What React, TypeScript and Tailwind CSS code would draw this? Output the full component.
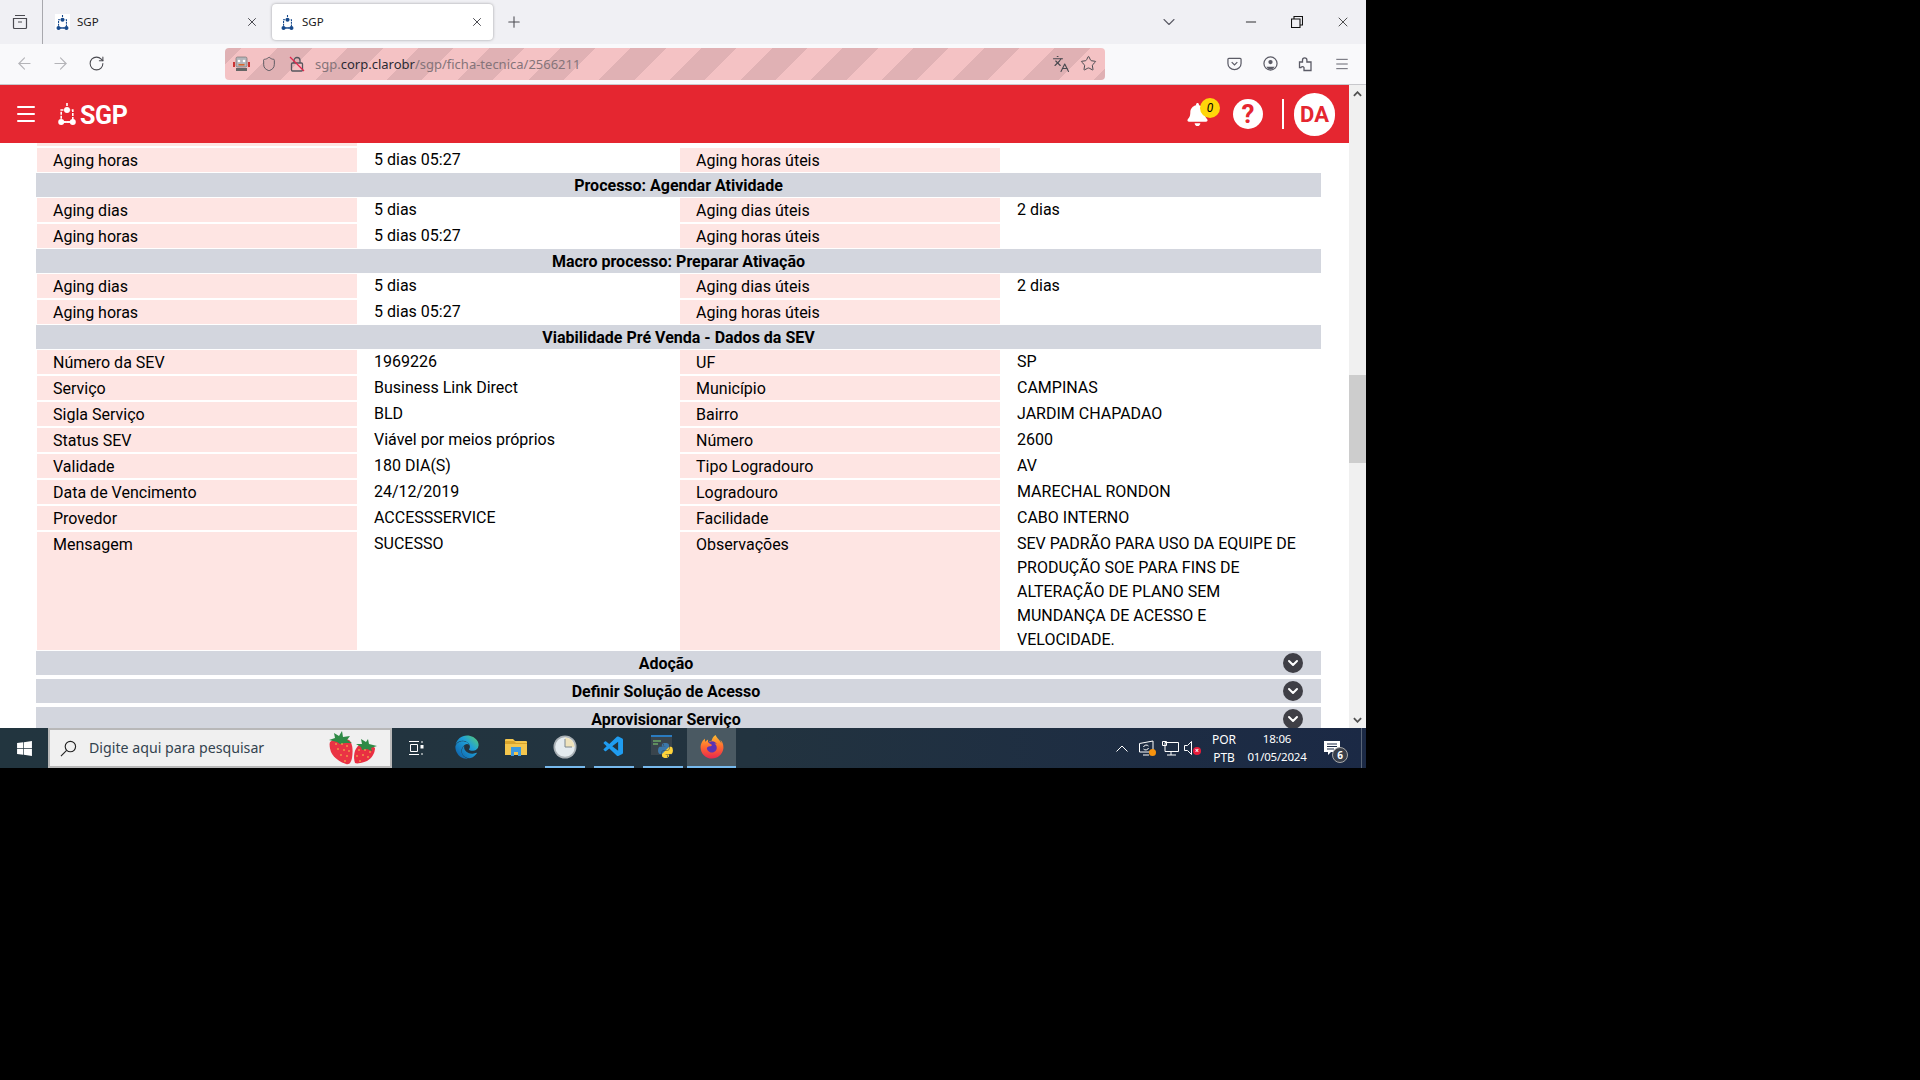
import React from "react";
import { ArrowLeft, ArrowRight, RotateCw, Shield, Star, Languages, X, Plus, ChevronDown, Menu, Minus } from "lucide-react";
import { FaBell, FaWindows, FaFirefoxBrowser, FaPython, FaEdge } from "react-icons/fa";
import { VscVscode } from "react-icons/vsc";

const ff = "font-['Roboto',sans-serif]";

function NetLogo({ className, color }: { className: string; color: string }) {
  return (
    <svg viewBox="0 0 18 22" className={className} fill="none">
      <path d="M9 0v4M5.5 7H3.2v12h11.6V7h-2.3" stroke={color} strokeWidth="1.6" strokeDasharray="3 1" />
      <circle cx="9" cy="7" r="3" fill={color} />
      <circle cx="3.2" cy="19" r="3" fill={color} />
      <circle cx="14.8" cy="19" r="3" fill={color} />
      <path d="M3 19h12" stroke={color} strokeWidth="1.8" />
    </svg>
  );
}

function Tab({ active }: { active?: boolean }) {
  return (
    <div className={"w-[221px] h-[36px] flex items-center pl-[8px] rounded " + (active ? "bg-white shadow-[0_0_3px_rgba(0,0,0,0.35)]" : "")}>
      <div className="w-[15px] h-[16px] bg-white flex items-center justify-center shrink-0">
        <NetLogo className="w-[13px] h-[15px] shrink-0" color="#174a8c" />
      </div>
      <span className="ml-[7px] text-[11.5px] text-[#1c1b22] font-['Noto_Sans',sans-serif]">SGP</span>
      <X className="ml-auto mr-[9px] w-[14px] h-[14px] text-[#33333a]" strokeWidth={1.5} />
    </div>
  );
}

function Label({ children }: { children: React.ReactNode }) {
  return (
    <div className="my-px bg-[#fee5e3] leading-6 pl-[16px]">
      <span className="block translate-y-px">{children}</span>
    </div>
  );
}

function Row({ a, b, c, d }: { a: string; b?: string; c: string; d?: React.ReactNode }) {
  return (
    <div className="grid grid-cols-[320px_323px_320px_320px] ml-px">
      <Label>{a}</Label>
      <div className="pl-[17px] leading-6 translate-y-px">{b}</div>
      <Label>{c}</Label>
      <div className="pl-[17px] leading-6 pr-[14px] translate-y-px">{d}</div>
    </div>
  );
}

function Section({ children }: { children: string }) {
  return (
    <div className="h-[24px] bg-[#d3d6de] text-center font-bold leading-6">
      <span className="block translate-y-px">{children}</span>
    </div>
  );
}

function Accordion({ children }: { children: string }) {
  return (
    <div className="h-[24px] shrink-0 bg-[#d3d6de] flex items-center mb-[4px]">
      <div className="flex-1 text-center font-bold leading-6 translate-y-px">{children}</div>
      <div className="w-[20px] h-[20px] shrink-0 -ml-[13px] mr-[18px] rounded-full bg-[#3f3f46] flex items-center justify-center">
        <ChevronDown className="w-[16px] h-[16px] text-white" strokeWidth={3} />
      </div>
    </div>
  );
}

function Strawberries() {
  return (
    <svg viewBox="0 0 50 34" className="w-[50px] h-[34px]">
      <path d="M2 11c4-4 12-5 19-2 4 3 4 12 3 18-1 5-3 7-6 6-6-2-12-6-15-12-1-3-2-7-1-10z" fill="#ea3344" />
      <path d="M1 9l6-2-1-5 5 3 3-5 1 6 7-1-3 4 5 3-7 0-5 1-3-2-8-2z" fill="#2f8a46" />
      <path d="M31 14c5-2 13 0 16 3 0 5-3 10-8 13-5 2-10 3-12 2-2-6-1-14 4-18z" fill="#e92f42" />
      <path d="M28 13l6 0-1-5 5 3 2-3 1 5 8 2-6 2 1 3-5-2-5 1-1-3-5-3z" fill="#2f8a46" />
      {[[8,13],[14,13],[19,15],[10,18],[16,19],[21,20],[13,24],[19,25],[17,30],[31,19],[37,19],[42,21],[29,25],[35,24],[40,26],[32,30]].map(([x, y], i) => (
        <circle key={i} cx={x} cy={y} r="0.8" fill="#f6d84c" />
      ))}
    </svg>
  );
}

function AppSlot({ children, bar, active }: { children: React.ReactNode; bar?: boolean; active?: boolean }) {
  return (
    <div className={"w-[49px] h-full flex flex-col items-center " + (active ? "bg-[#4a5962]" : "")}>
      <div className="flex-1 flex items-center justify-center">{children}</div>
      <div className={"h-[2px] " + (active ? "w-full bg-[#76b9ed]" : bar ? "w-[40px] bg-[#76b9ed]" : "w-[40px]")} />
    </div>
  );
}

export default function App() {
  return (
    <div className={"w-[1920px] h-[1080px] bg-black overflow-hidden " + ff}>
      <svg className="w-0 h-0 absolute">
        <defs>
          <linearGradient id="edgeg" x1="0" y1="1" x2="1" y2="0">
            <stop offset="0" stopColor="#0c59a4" />
            <stop offset="0.6" stopColor="#1fa0d8" />
            <stop offset="1" stopColor="#5fd068" />
          </linearGradient>
          <linearGradient id="pyg" x1="0" y1="0" x2="1" y2="1">
            <stop offset="0.48" stopColor="#3b78ab" />
            <stop offset="0.52" stopColor="#ffd43b" />
          </linearGradient>
          <linearGradient id="ffg" x1="0.5" y1="0" x2="0.5" y2="1">
            <stop offset="0" stopColor="#ffbd30" />
            <stop offset="0.5" stopColor="#ff6a2f" />
            <stop offset="1" stopColor="#e8274f" />
          </linearGradient>
        </defs>
      </svg>
      <div className="w-[1366px] h-[768px] flex flex-col">
        {/* Tab strip */}
        <div className="h-[44px] shrink-0 bg-[#f0f0f4] flex items-center">
          <div className="w-[43px] h-full border-r border-[#a8a8ad] flex items-center justify-center">
            <svg viewBox="0 0 16 16" className="w-[16px] h-[16px] -ml-[3px]" fill="none" stroke="#4a4a50" strokeWidth="1.2">
              <path d="M3 1.5h10M1.5 4.5h13v9a1 1 0 0 1-1 1h-11a1 1 0 0 1-1-1zM6 8h4" />
            </svg>
          </div>
          <div className="ml-[4px]"><Tab /></div>
          <div className="ml-[4px]"><Tab active /></div>
          <Plus className="ml-[12px] w-[18px] h-[18px] text-[#4a4a50]" strokeWidth={1.4} />
          <ChevronDown className="ml-auto mr-[49px] w-[20px] h-[20px] text-[#5b5b66]" strokeWidth={1.3} />
          <div className="w-[46px] flex justify-center"><Minus className="w-[16px] h-[16px] text-[#111]" strokeWidth={1.3} /></div>
          <div className="w-[46px] flex justify-center">
            <svg viewBox="0 0 12 12" className="w-[12px] h-[12px]" fill="none" stroke="#111" strokeWidth="1.1">
              <path d="M.5 3h8.500v8.500H.5zM3 3V.5h8.500V9H9" />
            </svg>
          </div>
          <div className="w-[46px] flex justify-center"><X className="w-[16px] h-[16px] text-[#111]" strokeWidth={1.1} /></div>
        </div>

        {/* Toolbar */}
        <div className="h-[41px] shrink-0 bg-[#f9f9fb] border-b border-[#c8c8cc] flex items-center pl-[6px] pb-[1px]">
          <div className="w-[36px] flex justify-center"><ArrowLeft className="w-[19px] h-[19px] text-[#b4b4b8]" strokeWidth={1.4} /></div>
          <div className="w-[36px] flex justify-center"><ArrowRight className="w-[19px] h-[19px] text-[#b4b4b8]" strokeWidth={1.4} /></div>
          <div className="w-[36px] flex justify-center"><RotateCw className="w-[17px] h-[17px] text-[#4a4a50]" strokeWidth={1.5} /></div>
          <div className="ml-[111px] w-[880px] h-[32px] rounded-[4px] flex items-center pl-[8px] pr-[8px] bg-[repeating-linear-gradient(-45deg,#e0b1b4_0px,#e0b1b4_8px,#f4c2c4_8px,#f4c2c4_33px,#e0b1b4_33px,#e0b1b4_50px)]">
            <svg viewBox="0 0 17 16" className="w-[17px] h-[16px] shrink-0">
              <rect x="0" y="6" width="2" height="5" fill="#c33" />
              <rect x="15" y="6" width="2" height="5" fill="#c33" />
              <rect x="3" y="1" width="11" height="10" rx="1.500" fill="#b5b5ba" stroke="#666" strokeWidth="0.6" />
              <circle cx="6" cy="5" r="1.300" fill="#fff" />
              <circle cx="11" cy="5" r="1.300" fill="#fff" />
              <rect x="5.500" y="8" width="6" height="1.500" fill="#d9652a" />
              <rect x="3" y="12" width="11" height="3" fill="#666" />
            </svg>
            <Shield className="ml-[11px] w-[16px] h-[16px] shrink-0 text-[#55555c]" strokeWidth={1.4} />
            <svg viewBox="0 0 16 16" className="ml-[12px] w-[16px] h-[16px] shrink-0" fill="none">
              <rect x="2.500" y="7" width="11" height="8" rx="1" stroke="#55555c" strokeWidth="1.3" />
              <path d="M5 7V4.500a3 3 0 0 1 6 0V7" stroke="#55555c" strokeWidth="1.3" />
              <path d="M1 1l14 14" stroke="#e2264d" strokeWidth="1.3" />
            </svg>
            <span className="ml-[10px] translate-y-px text-[13px] text-[#857479] font-['Noto_Sans',sans-serif]">
              sgp.<span className="text-[#2b2a33]">corp.clarobr</span>/sgp/ficha-tecnica/2566211
            </span>
            <Languages className="ml-auto w-[18px] h-[18px] text-[#4a4a50]" strokeWidth={1.5} />
            <Star className="ml-[10px] w-[17px] h-[17px] text-[#4a4a50]" strokeWidth={1.4} />
          </div>
          <div className="ml-[111px] w-[36px] flex justify-center">
            <svg viewBox="0 0 16 16" className="w-[15px] h-[15px]" fill="none" stroke="#5b5b66" strokeWidth="1.3">
              <path d="M2 2.500h12a1 1 0 0 1 1 1V8a7 6.500 0 0 1-14 0V3.500a1 1 0 0 1 1-1zM5 6.500l3 3 3-3" />
            </svg>
          </div>
          <div className="w-[36px] flex justify-center">
            <svg viewBox="0 0 16 16" className="w-[15px] h-[15px]" fill="none">
              <circle cx="8" cy="8" r="7" stroke="#5b5b66" strokeWidth="1.3" />
              <circle cx="8" cy="6.500" r="2.300" fill="#5b5b66" />
              <path d="M3.500 11.500h9a5 5 0 0 1-9 0z" fill="#5b5b66" />
            </svg>
          </div>
          <div className="w-[36px] flex justify-center">
            <svg viewBox="0 0 16 16" className="w-[16px] h-[16px]" fill="none" stroke="#5b5b66" strokeWidth="1.3">
              <path d="M1.500 6h3V4a2.200 2.200 0 0 1 4.400 0v2H13v8.500H6v-3a1.800 1.800 0 0 0-3 0H1.500z" />
            </svg>
          </div>
          <div className="w-[36px] flex justify-center"><Menu className="w-[16px] h-[16px] text-[#5b5b66]" strokeWidth={1.4} /></div>
        </div>

        {/* Page */}
        <div className="h-[643px] shrink-0 flex">
          <div className="w-[1349px] flex flex-col bg-white text-[16px] text-black">
            <div className="h-[58px] shrink-0 bg-[#e52630] flex items-center text-white">
              <Menu className="ml-[14px] w-[24px] h-[24px]" strokeWidth={2} />
              <NetLogo className="ml-[20px] w-[18px] h-[22px]" color="#fff" />
              <span className="ml-[4px] text-[25px] font-bold leading-none tracking-[-0.3px] translate-y-px">SGP</span>
              <div className="ml-auto relative w-[24px] h-[24px] flex items-center justify-center mr-[24px]">
                <FaBell className="w-[21px] h-[23px]" />
                <div className="absolute -top-[4px] left-[15px] w-[20px] h-[20px] rounded-full bg-[#ffd60a] text-black text-[12px] italic flex items-center justify-center">0</div>
              </div>
              <div className="w-[30px] h-[30px] rounded-full bg-white text-[#e52630] text-[26px] font-bold flex items-center justify-center">?</div>
              <div className="ml-[19px] w-[2px] h-[30px] bg-white" />
              <div className="ml-[10px] mr-[14px] w-[41px] h-[43px] rounded-full bg-white text-[#e52630] text-[22px] font-bold flex items-center justify-center">DA</div>
            </div>
            <div className="flex-1 min-h-0 overflow-hidden pl-[36px] pr-[28px]">
              <div className="ml-px w-[320px] h-[3px] bg-[#fee5e3]" />
              <div className="h-[1px]" />
              <Row a="Aging horas" b="5 dias 05:27" c="Aging horas úteis" />
              <Section>Processo: Agendar Atividade</Section>
              <Row a="Aging dias" b="5 dias" c="Aging dias úteis" d="2 dias" />
              <Row a="Aging horas" b="5 dias 05:27" c="Aging horas úteis" />
              <Section>Macro processo: Preparar Ativação</Section>
              <Row a="Aging dias" b="5 dias" c="Aging dias úteis" d="2 dias" />
              <Row a="Aging horas" b="5 dias 05:27" c="Aging horas úteis" />
              <Section>Viabilidade Pré Venda - Dados da SEV</Section>
              <Row a="Número da SEV" b="1969226" c="UF" d="SP" />
              <Row a="Serviço" b="Business Link Direct" c="Município" d="CAMPINAS" />
              <Row a="Sigla Serviço" b="BLD" c="Bairro" d="JARDIM CHAPADAO" />
              <Row a="Status SEV" b="Viável por meios próprios" c="Número" d="2600" />
              <Row a="Validade" b="180 DIA(S)" c="Tipo Logradouro" d="AV" />
              <Row a="Data de Vencimento" b="24/12/2019" c="Logradouro" d="MARECHAL RONDON" />
              <Row a="Provedor" b="ACCESSSERVICE" c="Facilidade" d="CABO INTERNO" />
              <Row a="Mensagem" b="SUCESSO" c="Observações" d="SEV PADRÃO PARA USO DA EQUIPE DE PRODUÇÃO SOE PARA FINS DE ALTERAÇÃO DE PLANO SEM MUNDANÇA DE ACESSO E VELOCIDADE." />
              <Accordion>Adoção</Accordion>
              <Accordion>Definir Solução de Acesso</Accordion>
              <Accordion>Aprovisionar Serviço</Accordion>
            </div>
          </div>
          {/* Scrollbar */}
          <div className="w-[17px] bg-[#f0f0f0] flex flex-col items-center">
            <div className="h-[17px] w-full flex items-center justify-center">
              <svg viewBox="0 0 10 6" className="w-[9px] h-[6px]" fill="none" stroke="#505050" strokeWidth="2"><path d="M1 5l4-4 4 4" /></svg>
            </div>
            <div className="h-[273px]" />
            <div className="h-[88px] w-full bg-[#cdcdcd]" />
            <div className="flex-1" />
            <div className="h-[17px] w-full flex items-center justify-center">
              <svg viewBox="0 0 10 6" className="w-[9px] h-[6px]" fill="none" stroke="#505050" strokeWidth="2"><path d="M1 1l4 4 4-4" /></svg>
            </div>
          </div>
        </div>

        {/* Taskbar */}
        <div className="h-[40px] shrink-0 flex items-center bg-linear-to-r from-[#22353f] via-[#22333f] via-55% to-[#1b2945] text-white font-['Noto_Sans',sans-serif]">
          <div className="w-[48px] flex justify-center"><FaWindows className="w-[17px] h-[17px]" /></div>
          <div className="w-[344px] h-full bg-[#f0f0f0] border-2 border-[#b8b8b8] flex items-center pl-[10px] pr-[12px]">
            <svg viewBox="0 0 18 18" className="w-[17px] h-[17px] shrink-0" fill="none" stroke="#222" strokeWidth="1.200">
              <circle cx="11" cy="7" r="5.500" /><path d="M7 11l-6 6" />
            </svg>
            <span className="ml-[12px] text-[14.2px] text-[#33434f]">Digite aqui para pesquisar</span>
            <div className="ml-auto"><Strawberries /></div>
          </div>
          <div className="w-[50px] h-full flex items-center justify-center">
            <svg viewBox="0 0 16 16" className="w-[16px] h-[16px] -ml-[3px]" fill="none" stroke="#fff" strokeWidth="1">
              <path d="M1 1.500h10M1 14.500h10M2.500 4.500h7v7h-7zM14 1v2M14 13v2" /><rect x="13" y="5.500" width="2" height="2.500" fill="#fff" />
            </svg>
          </div>
          <AppSlot><FaEdge className="w-[24px] h-[24px] fill-[url(#edgeg)]" /></AppSlot>
          <AppSlot>
            <svg viewBox="0 0 22 18" className="w-[22px] h-[18px]">
              <path d="M0 2a1 1 0 0 1 1-1h7l2 2h11a1 1 0 0 1 1 1v13H0z" fill="#f4c64d" />
              <path d="M0 3h9l2 2h11v1H0z" fill="#d9a42c" />
              <path d="M6 9h10v9h-3v-4H9v4H6z" fill="#3c9ae0" />
            </svg>
          </AppSlot>
          <AppSlot bar>
            <svg viewBox="0 0 24 24" className="w-[24px] h-[24px]">
              <circle cx="12" cy="12" r="11.500" fill="#a9b0b5" />
              <circle cx="12" cy="12" r="9.800" fill="#e4ebef" />
              <path d="M12 12V2.500a9.500 9.500 0 0 1 9.500 9.500z" fill="#efe3bc" />
              <path d="M12 4v8h7" stroke="#7d8890" strokeWidth="1" fill="none" />
            </svg>
          </AppSlot>
          <AppSlot bar><VscVscode className="w-[24px] h-[24px] text-[#1f9cf0]" /></AppSlot>
          <AppSlot bar>
            <div className="relative w-[23px] h-[24px]">
              <div className="w-[21px] h-[20px] bg-[#39444c] border-t-2 border-[#2a7bc0] pl-[2px] pt-[3px]">
                <div className="w-[8px] h-[2px] bg-[#5f8f5f]" />
                <div className="mt-[1px] w-[5px] h-[2px] bg-[#5f8f5f]" />
              </div>
              <FaPython className="absolute right-0 bottom-0 w-[17px] h-[17px] fill-[url(#pyg)]" />
            </div>
          </AppSlot>
          <AppSlot active>
            <div className="relative w-[24px] h-[24px] flex items-center justify-center">
              <div className="absolute w-[12px] h-[12px] rounded-full bg-[#5b32b5]" />
              <FaFirefoxBrowser className="relative w-[24px] h-[24px] fill-[url(#ffg)]" />
            </div>
          </AppSlot>
          <div className="ml-auto flex items-center h-full">
            <div className="w-[24px] flex justify-center">
              <svg viewBox="0 0 12 7" className="w-[12px] h-[7px]" fill="none" stroke="#fff" strokeWidth="1"><path d="M.5 6.500L6 1l5.500 5.500" /></svg>
            </div>
            <div className="w-[24px] flex justify-center relative">
              <svg viewBox="0 0 17 16" className="w-[17px] h-[16px]" fill="none" stroke="#fff" strokeWidth="1">
                <path d="M1.500 3.500L15 1v11H1.500zM5 15h6M5.500 7a3 3 0 0 1 5-1M10.500 8a3 3 0 0 1-5 1" />
              </svg>
              <div className="absolute right-[2px] bottom-0 w-[7px] h-[7px] rounded-full bg-[#f7930e]" />
            </div>
            <div className="w-[24px] flex justify-center">
              <svg viewBox="0 0 17 15" className="w-[17px] h-[15px]" fill="none" stroke="#fff" strokeWidth="1">
                <path d="M3 1.500h13.500v9H3zM5 14h9M9 11v3M.5 .5h4v4h-4z" />
              </svg>
            </div>
            <div className="w-[20px] flex justify-center relative">
              <svg viewBox="0 0 9 14" className="w-[9px] h-[14px] -ml-[8px]" fill="none" stroke="#fff" strokeWidth="1"><path d="M.5 4.500h3l4-4v13l-4-4h-3z" /></svg>
              <div className="absolute right-[1px] bottom-[0px] w-[8px] h-[8px] rounded-full bg-[#e81c3a] text-[7px] leading-[8px] text-center font-bold">×</div>
            </div>
            <div className="w-[44px] text-center text-[12px] leading-[18px] translate-y-px">POR<br />PTB</div>
            <div className="w-[62px] text-center text-[11.5px] leading-[18px] tracking-[-0.2px]">18:06<br />01/05/2024</div>
            <div className="w-[48px] flex justify-center relative">
              <svg viewBox="0 0 16 16" className="w-[16px] h-[16px]"><path d="M0 1h16v11H7l-3 3v-3H0z" fill="#fff" /><path d="M3 4h10M3 6.500h10M3 9h7" stroke="#1b2945" strokeWidth="1" /></svg>
              <div className="absolute left-[24px] top-[7px] w-[16px] h-[16px] rounded-full bg-[#3a3f4a] border border-[#aaa] text-[10px] font-bold leading-[14px] text-center">6</div>
            </div>
            <div className="w-[5px]" />
            <div className="w-px h-full bg-[#5a6678]" />
            <div className="w-[4px]" />
          </div>
        </div>
      </div>
    </div>
  );
}
